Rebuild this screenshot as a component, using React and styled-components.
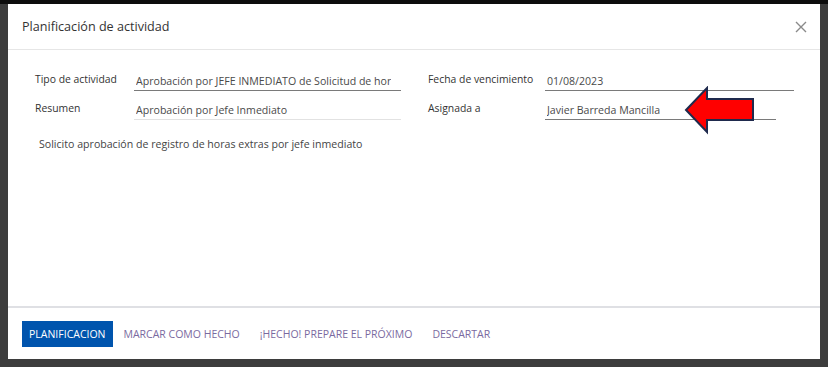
import React from 'react';
import styled, { createGlobalStyle } from 'styled-components';

const GlobalStyle = createGlobalStyle`
    html, body {
        margin: 0;
        padding: 0;
        background: #3b3b3b;
    }
    body {
        font-family: "Open Sans", "Liberation Sans", sans-serif;
        color: #4c4c4c;
    }
`;

const Backdrop = styled.div`
    width: 828px;
    height: 367px;
    box-sizing: border-box;
    background: #3d3d3d;
    border-top: 4px solid #0d0d0d;
    padding: 0 8px 0 8px;
    overflow: hidden;
`;

const Modal = styled.div`
    background: #fff;
    height: 355px;
    display: flex;
    flex-direction: column;
`;

const Header = styled.header`
    height: 45px;
    display: flex;
    align-items: center;
    justify-content: space-between;
    padding: 0 12px 0 14px;
    border-bottom: 1px solid #e6e6e6;
    h4 {
        margin: 0;
        font-size: 12.6px;
        font-weight: 400;
        color: #333;
    }
`;

const Close = styled.button`
    border: none;
    background: none;
    padding: 0;
    width: 14px;
    height: 14px;
    display: flex;
    align-items: center;
    justify-content: center;
`;

const Body = styled.div`
    flex: 1;
    padding: 12px 26px 0 27px;
    position: relative;
`;

const Columns = styled.div`
    display: grid;
    grid-template-columns: 367px 1fr;
    column-gap: 26px;
`;

const Group = styled.div`
    display: flex;
    flex-direction: column;
`;

const Row = styled.div`
    display: flex;
    align-items: flex-end;
    height: 29px;
`;

const Label = styled.div`
    width: ${(p) => p.width}px;
    flex: none;
    font-size: 10.4px;
    color: #333;
    padding-bottom: 5px;
    white-space: nowrap;
`;

const Field = styled.div`
    width: ${(p) => p.width}px;
    box-sizing: border-box;
    flex: none;
    font-size: 10.6px;
    color: #4a4a4a;
    padding: 0 10px 2px 2px;
    border-bottom: 1px solid ${(p) => (p.muted ? '#e2e2e2' : '#7a7a7a')};
`;

const Value = styled.span`
    display: block;
    white-space: nowrap;
    overflow: hidden;
`;

const Note = styled.p`
    margin: 17px 0 0 4px;
    font-size: 10.6px;
    color: #444;
`;

const Arrow = styled.svg`
    position: absolute;
    left: 676px;
    top: 36px;
`;

const Footer = styled.footer`
    height: 51px;
    border-top: 2px solid #dfe0e4;
    display: flex;
    align-items: center;
    padding: 0 14px;
`;

const Button = styled.button`
    height: 26px;
    border: none;
    font-family: inherit;
    font-size: 10.5px;
    padding: 0 ${(p) => (p.primary ? 7 : 9)}px;
    margin-right: 2px;
    background: ${(p) => (p.primary ? '#0054ad' : 'transparent')};
    color: ${(p) => (p.primary ? '#fff' : '#7a6aa0')};
    border-radius: 0;
`;

const App = () => {
    return (
        <>
            <GlobalStyle />
            <Backdrop>
                <Modal>
                    <Header>
                        <h4>Planificación de actividad</h4>
                        <Close>
                            <svg width="12" height="12" viewBox="0 0 12 12">
                                <path d="M1 1L11 11M11 1L1 11" stroke="#8a8a8a" strokeWidth="1.4" />
                            </svg>
                        </Close>
                    </Header>
                    <Body>
                        <Columns>
                            <Group>
                                <Row>
                                    <Label width={99}>Tipo de actividad</Label>
                                    <Field width={267}>
                                        <Value>Aprobación por JEFE INMEDIATO de Solicitud de horas extras</Value>
                                    </Field>
                                </Row>
                                <Row>
                                    <Label width={99}>Resumen</Label>
                                    <Field width={267} muted>
                                        <Value>Aprobación por Jefe Inmediato</Value>
                                    </Field>
                                </Row>
                            </Group>
                            <Group>
                                <Row>
                                    <Label width={117}>Fecha de vencimiento</Label>
                                    <Field width={249}>
                                        <Value>01/08/2023</Value>
                                    </Field>
                                </Row>
                                <Row>
                                    <Label width={117}>Asignada a</Label>
                                    <Field width={231}>
                                        <Value>Javier Barreda Mancilla</Value>
                                    </Field>
                                </Row>
                            </Group>
                        </Columns>
                        <Note>Solicito aprobación de registro de horas extras por jefe inmediato</Note>
                        <Arrow width="72" height="50" viewBox="0 0 72 50">
                            <path
                                d="M2 24L23 2V13H69V34H23V46Z"
                                fill="#ff0000"
                                stroke="#1f2a4d"
                                strokeWidth="2"
                                strokeLinejoin="miter"
                            />
                        </Arrow>
                    </Body>
                    <Footer>
                        <Button primary>PLANIFICACION</Button>
                        <Button>MARCAR COMO HECHO</Button>
                        <Button>¡HECHO! PREPARE EL PRÓXIMO</Button>
                        <Button>DESCARTAR</Button>
                    </Footer>
                </Modal>
            </Backdrop>
        </>
    );
};

export default App;
